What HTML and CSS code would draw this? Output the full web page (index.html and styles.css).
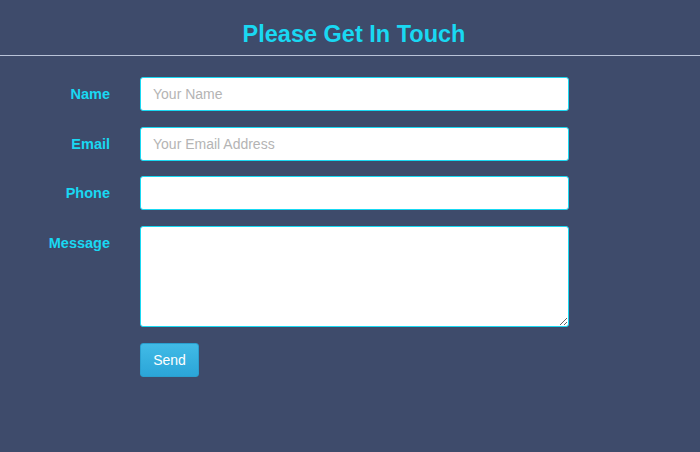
FILE: index.html
```html
<!DOCTYPE html>
<html>
<head>
<meta charset="utf-8">
<link rel="stylesheet" href="styles.css">
</head>
<body>
<header class="header">
  <h1 class="title">Please Get In Touch</h1>
</header>
<form class="form">
  <label class="label" for="name">Name</label>
  <input class="field" id="name" type="text" placeholder="Your Name">
  <label class="label" for="email">Email</label>
  <input class="field" id="email" type="text" placeholder="Your Email Address">
  <label class="label" for="phone">Phone</label>
  <input class="field" id="phone" type="text">
  <label class="label" for="message">Message</label>
  <textarea class="field area" id="message"></textarea>
  <span></span>
  <div><button class="send" type="button">Send</button></div>
</form>
</body>
</html>
```
FILE: styles.css
```css
html, body {
  margin: 0;
  padding: 0;
  background: #3e4b6b;
  height: 100%;
  font-family: "Liberation Sans", Arial, sans-serif;
}
.header {
  height: 55px;
  border-bottom: 1px solid #b9c3d8;
  display: flex;
  justify-content: center;
  align-items: flex-start;
}
.title {
  margin: 20px 0 0 8px;
  font-size: 23.5px;
  line-height: 28px;
  font-weight: bold;
  color: #19d8f2;
}
.form {
  display: grid;
  grid-template-columns: 110px 429px;
  column-gap: 30px;
  row-gap: 15.67px;
  padding-top: 21px;
  align-items: start;
}
.label {
  text-align: right;
  font-size: 14.5px;
  font-weight: bold;
  line-height: 34px;
  color: #19d8f2;
}
.field {
  box-sizing: border-box;
  height: 34px;
  width: 429px;
  margin: 0;
  border: 1px solid #19d8f2;
  border-radius: 3px;
  background: #fff;
  padding: 0 12px;
  font-family: "Liberation Sans", Arial, sans-serif;
  font-size: 14px;
  color: #333;
  outline: none;
}
.field::placeholder {
  color: #b4b4b4;
}
.area {
  height: 101px;
  padding: 8px 12px;
  resize: both;
  display: block;
}
.send {
  box-sizing: border-box;
  width: 59px;
  height: 34px;
  border: 1px solid #2a9fcf;
  border-radius: 3px;
  background: linear-gradient(#41bbe6, #2ba5d8);
  color: #fff;
  font-family: "Liberation Sans", Arial, sans-serif;
  font-size: 14px;
  padding: 0;
}
```
